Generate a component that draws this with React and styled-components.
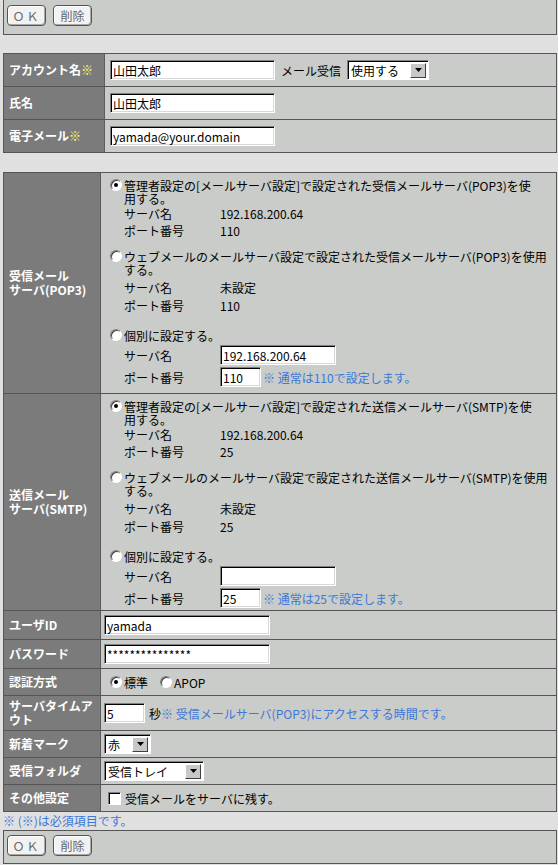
import React from 'react';
import styled, { createGlobalStyle } from 'styled-components';

const GlobalStyle = createGlobalStyle`
  body {
    margin: 0;
    background: #e0e0e0;
    font-family: "Noto Sans CJK JP", "DejaVu Sans", sans-serif;
    font-size: 12px;
    color: #000;
  }
`;

const Page = styled.div`
  padding: 0 1px 2px 3px;
`;

const ButtonBar = styled.div`
  display: flex;
  gap: 7px;
  height: ${(p) => p.$h}px;
  padding: ${(p) => p.$pt}px 0 0 3px;
  box-sizing: border-box;
  background: #c9ccc8;
  border: 1px solid #555;
  border-top: ${(p) => (p.$noTop ? 'none' : '1px solid #555')};
`;

const Button = styled.button`
  width: 39px;
  height: 21px;
  padding: 0;
  border: 1px solid #555;
  border-radius: 4px;
  background: #f2f2f2;
  box-shadow: inset 1px 1px #fff, inset -1px -1px #a8a8a8;
  font-family: inherit;
  font-size: 12px;
  color: #666;
  letter-spacing: ${(p) => p.$ls || 0}px;
  line-height: 19px;
`;

const FormTable = styled.div`
  margin-top: ${(p) => p.$mt}px;
  border: 1px solid #555;
`;

const Row = styled.div`
  display: grid;
  grid-template-columns: ${(p) => p.$lw}px 1fr;
  height: ${(p) => p.$h}px;
  & + & {
    border-top: 1px solid #555;
  }
`;

const Label = styled.div`
  display: flex;
  align-items: center;
  padding-left: 5px;
  background: #7b7b7b;
  border-right: 1px solid #5c5c5c;
  color: #fff;
  font-weight: bold;
  line-height: 14px;
`;

const Req = styled.span`
  color: #ffff66;
  font-weight: normal;
`;

const Value = styled.div`
  display: flex;
  align-items: center;
  gap: ${(p) => p.$gap || 0}px;
  padding-left: ${(p) => p.$pl}px;
  background: #c9ccc8;
  white-space: nowrap;
`;

const Block = styled.div`
  padding: 6px 0 0 3px;
  background: #c9ccc8;
  white-space: nowrap;
`;

const Input = styled.input`
  box-sizing: border-box;
  width: ${(p) => p.$w}px;
  height: 20px;
  padding: 0 2px;
  margin: 0;
  border: 1px solid;
  border-color: #808080 #fff #fff #808080;
  box-shadow: inset 1px 1px #000, inset -1px -1px #d8d8d8;
  background: #fff;
  font-family: inherit;
  font-size: 12px;
  color: #000;
  outline: none;
`;

const SelectBox = styled.div`
  box-sizing: border-box;
  display: flex;
  align-items: center;
  justify-content: space-between;
  width: ${(p) => p.$w}px;
  height: 20px;
  padding: 0 2px 0 3px;
  border: 1px solid;
  border-color: #808080 #fff #fff #808080;
  box-shadow: inset 1px 1px #000;
  background: #fff;
`;

const ArrowBtn = styled.span`
  display: flex;
  align-items: center;
  justify-content: center;
  width: 16px;
  height: 15px;
  box-sizing: border-box;
  background: #c8c8c8;
  border: 1px solid;
  border-color: #fff #404040 #404040 #fff;
`;

const Radio = styled.span`
  position: relative;
  flex: none;
  box-sizing: border-box;
  width: 12px;
  height: 12px;
  margin: 0 ${(p) => p.$mr ?? 2}px 0 ${(p) => p.$ml ?? 6}px;
  border-radius: 50%;
  border: 1px solid;
  border-color: #808080 #fff #fff #808080;
  box-shadow: inset 1px 1px #404040;
  background: #fff;
  &::after {
    content: '';
    display: ${(p) => (p.$on ? 'block' : 'none')};
    position: absolute;
    left: 3px;
    top: 3px;
    width: 4px;
    height: 4px;
    border-radius: 50%;
    background: #000;
  }
`;

const Check = styled.span`
  flex: none;
  box-sizing: border-box;
  width: 13px;
  height: 13px;
  margin: 0 4px 0 4px;
  border: 1px solid;
  border-color: #808080 #fff #fff #808080;
  box-shadow: inset 1px 1px #000;
  background: #fff;
`;

const Option = styled.div`
  margin-top: ${(p) => p.$mt || 0}px;
`;

const RadioLine = styled.div`
  display: flex;
  align-items: flex-start;
  line-height: 13px;
`;

const Details = styled.div`
  display: grid;
  grid-template-columns: 96px auto;
  grid-auto-rows: ${(p) => p.$rowH}px;
  align-items: center;
  margin-top: ${(p) => p.$mt}px;
  padding-left: 20px;
`;

const Field = styled.div`
  display: flex;
  align-items: center;
  gap: 2px;
`;

const Hint = styled.span`
  color: #3c78d8;
`;

const Note = styled.div`
  height: 18px;
  line-height: 18px;
  color: #3c78d8;
`;

function Select({ w, value }) {
  return (
    <SelectBox $w={w}>
      <span>{value}</span>
      <ArrowBtn>
        <svg width="7" height="4" viewBox="0 0 7 4">
          <path d="M0 0H7L3.5 4Z" fill="#000" />
        </svg>
      </ArrowBtn>
    </SelectBox>
  );
}

function Buttons({ h, pt, noTop }) {
  return (
    <ButtonBar $h={h} $pt={pt} $noTop={noTop}>
      <Button $ls={2}>ＯＫ</Button>
      <Button>削除</Button>
    </ButtonBar>
  );
}

function ServerBlock({ kind, host, port, preset }) {
  return (
    <Block>
      <Option>
        <RadioLine>
          <Radio $on />
          <span>
            管理者設定の[メールサーバ設定]で設定された{kind}メールサーバ({preset})を使
            <br />
            用する。
          </span>
        </RadioLine>
        <Details $rowH={17} $mt={0}>
          <span>サーバ名</span>
          <span>192.168.200.64</span>
          <span>ポート番号</span>
          <span>{port}</span>
        </Details>
      </Option>
      <Option $mt={11}>
        <RadioLine>
          <Radio />
          <span>
            ウェブメールのメールサーバ設定で設定された{kind}メールサーバ({preset})を使用
            <br />
            する。
          </span>
        </RadioLine>
        <Details $rowH={18} $mt={2}>
          <span>サーバ名</span>
          <span>未設定</span>
          <span>ポート番号</span>
          <span>{port}</span>
        </Details>
      </Option>
      <Option $mt={15}>
        <RadioLine>
          <Radio />
          <span>個別に設定する。</span>
        </RadioLine>
        <Details $rowH={22} $mt={2}>
          <span>サーバ名</span>
          <Input $w={116} defaultValue={host} />
          <span>ポート番号</span>
          <Field>
            <Input $w={41} defaultValue={port} />
            <Hint>※ 通常は{port}で設定します。</Hint>
          </Field>
        </Details>
      </Option>
    </Block>
  );
}

export default function App() {
  return (
    <Page>
      <GlobalStyle />
      <Buttons h={35} pt={5} noTop />

      <FormTable $mt={18}>
        <Row $lw={101} $h={32}>
          <Label>
            アカウント名<Req>※</Req>
          </Label>
          <Value $pl={5}>
            <Input $w={165} defaultValue="山田太郎" />
            <span style={{ margin: '0 6px' }}>メール受信</span>
            <Select w={82} value="使用する" />
          </Value>
        </Row>
        <Row $lw={101} $h={32}>
          <Label>氏名</Label>
          <Value $pl={5}>
            <Input $w={165} defaultValue="山田太郎" />
          </Value>
        </Row>
        <Row $lw={101} $h={32}>
          <Label>
            電子メール<Req>※</Req>
          </Label>
          <Value $pl={5}>
            <Input $w={165} defaultValue="yamada@your.domain" />
          </Value>
        </Row>
      </FormTable>

      <FormTable $mt={19}>
        <Row $lw={97} $h={220}>
          <Label>
            受信メール
            <br />
            サーバ(POP3)
          </Label>
          <ServerBlock kind="受信" preset="POP3" host="192.168.200.64" port="110" />
        </Row>
        <Row $lw={97} $h={216}>
          <Label>
            送信メール
            <br />
            サーバ(SMTP)
          </Label>
          <ServerBlock kind="送信" preset="SMTP" host="" port="25" />
        </Row>
        <Row $lw={97} $h={28}>
          <Label>ユーザID</Label>
          <Value $pl={3}>
            <Input $w={166} defaultValue="yamada" />
          </Value>
        </Row>
        <Row $lw={97} $h={28}>
          <Label>パスワード</Label>
          <Value $pl={3}>
            <Input $w={166} defaultValue="***************" />
          </Value>
        </Row>
        <Row $lw={97} $h={26}>
          <Label>認証方式</Label>
          <Value $pl={3}>
            <Radio $on />
            <span>標準</span>
            <Radio $ml={12} />
            <span>APOP</span>
          </Value>
        </Row>
        <Row $lw={97} $h={34}>
          <Label>
            サーバタイムア
            <br />
            ウト
          </Label>
          <Value $pl={3} $gap={4}>
            <Input $w={41} defaultValue="5" />
            <span>
              秒<Hint>※ 受信メールサーバ(POP3)にアクセスする時間です。</Hint>
            </span>
          </Value>
        </Row>
        <Row $lw={97} $h={26}>
          <Label>新着マーク</Label>
          <Value $pl={3}>
            <Select w={47} value="赤" />
          </Value>
        </Row>
        <Row $lw={97} $h={26}>
          <Label>受信フォルダ</Label>
          <Value $pl={3}>
            <Select w={100} value="受信トレイ" />
          </Value>
        </Row>
        <Row $lw={97} $h={26}>
          <Label>その他設定</Label>
          <Value $pl={3}>
            <Check />
            <span>受信メールをサーバに残す。</span>
          </Value>
        </Row>
      </FormTable>

      <Note>※ (※)は必須項目です。</Note>
      <Buttons h={34} pt={4} />
    </Page>
  );
}
